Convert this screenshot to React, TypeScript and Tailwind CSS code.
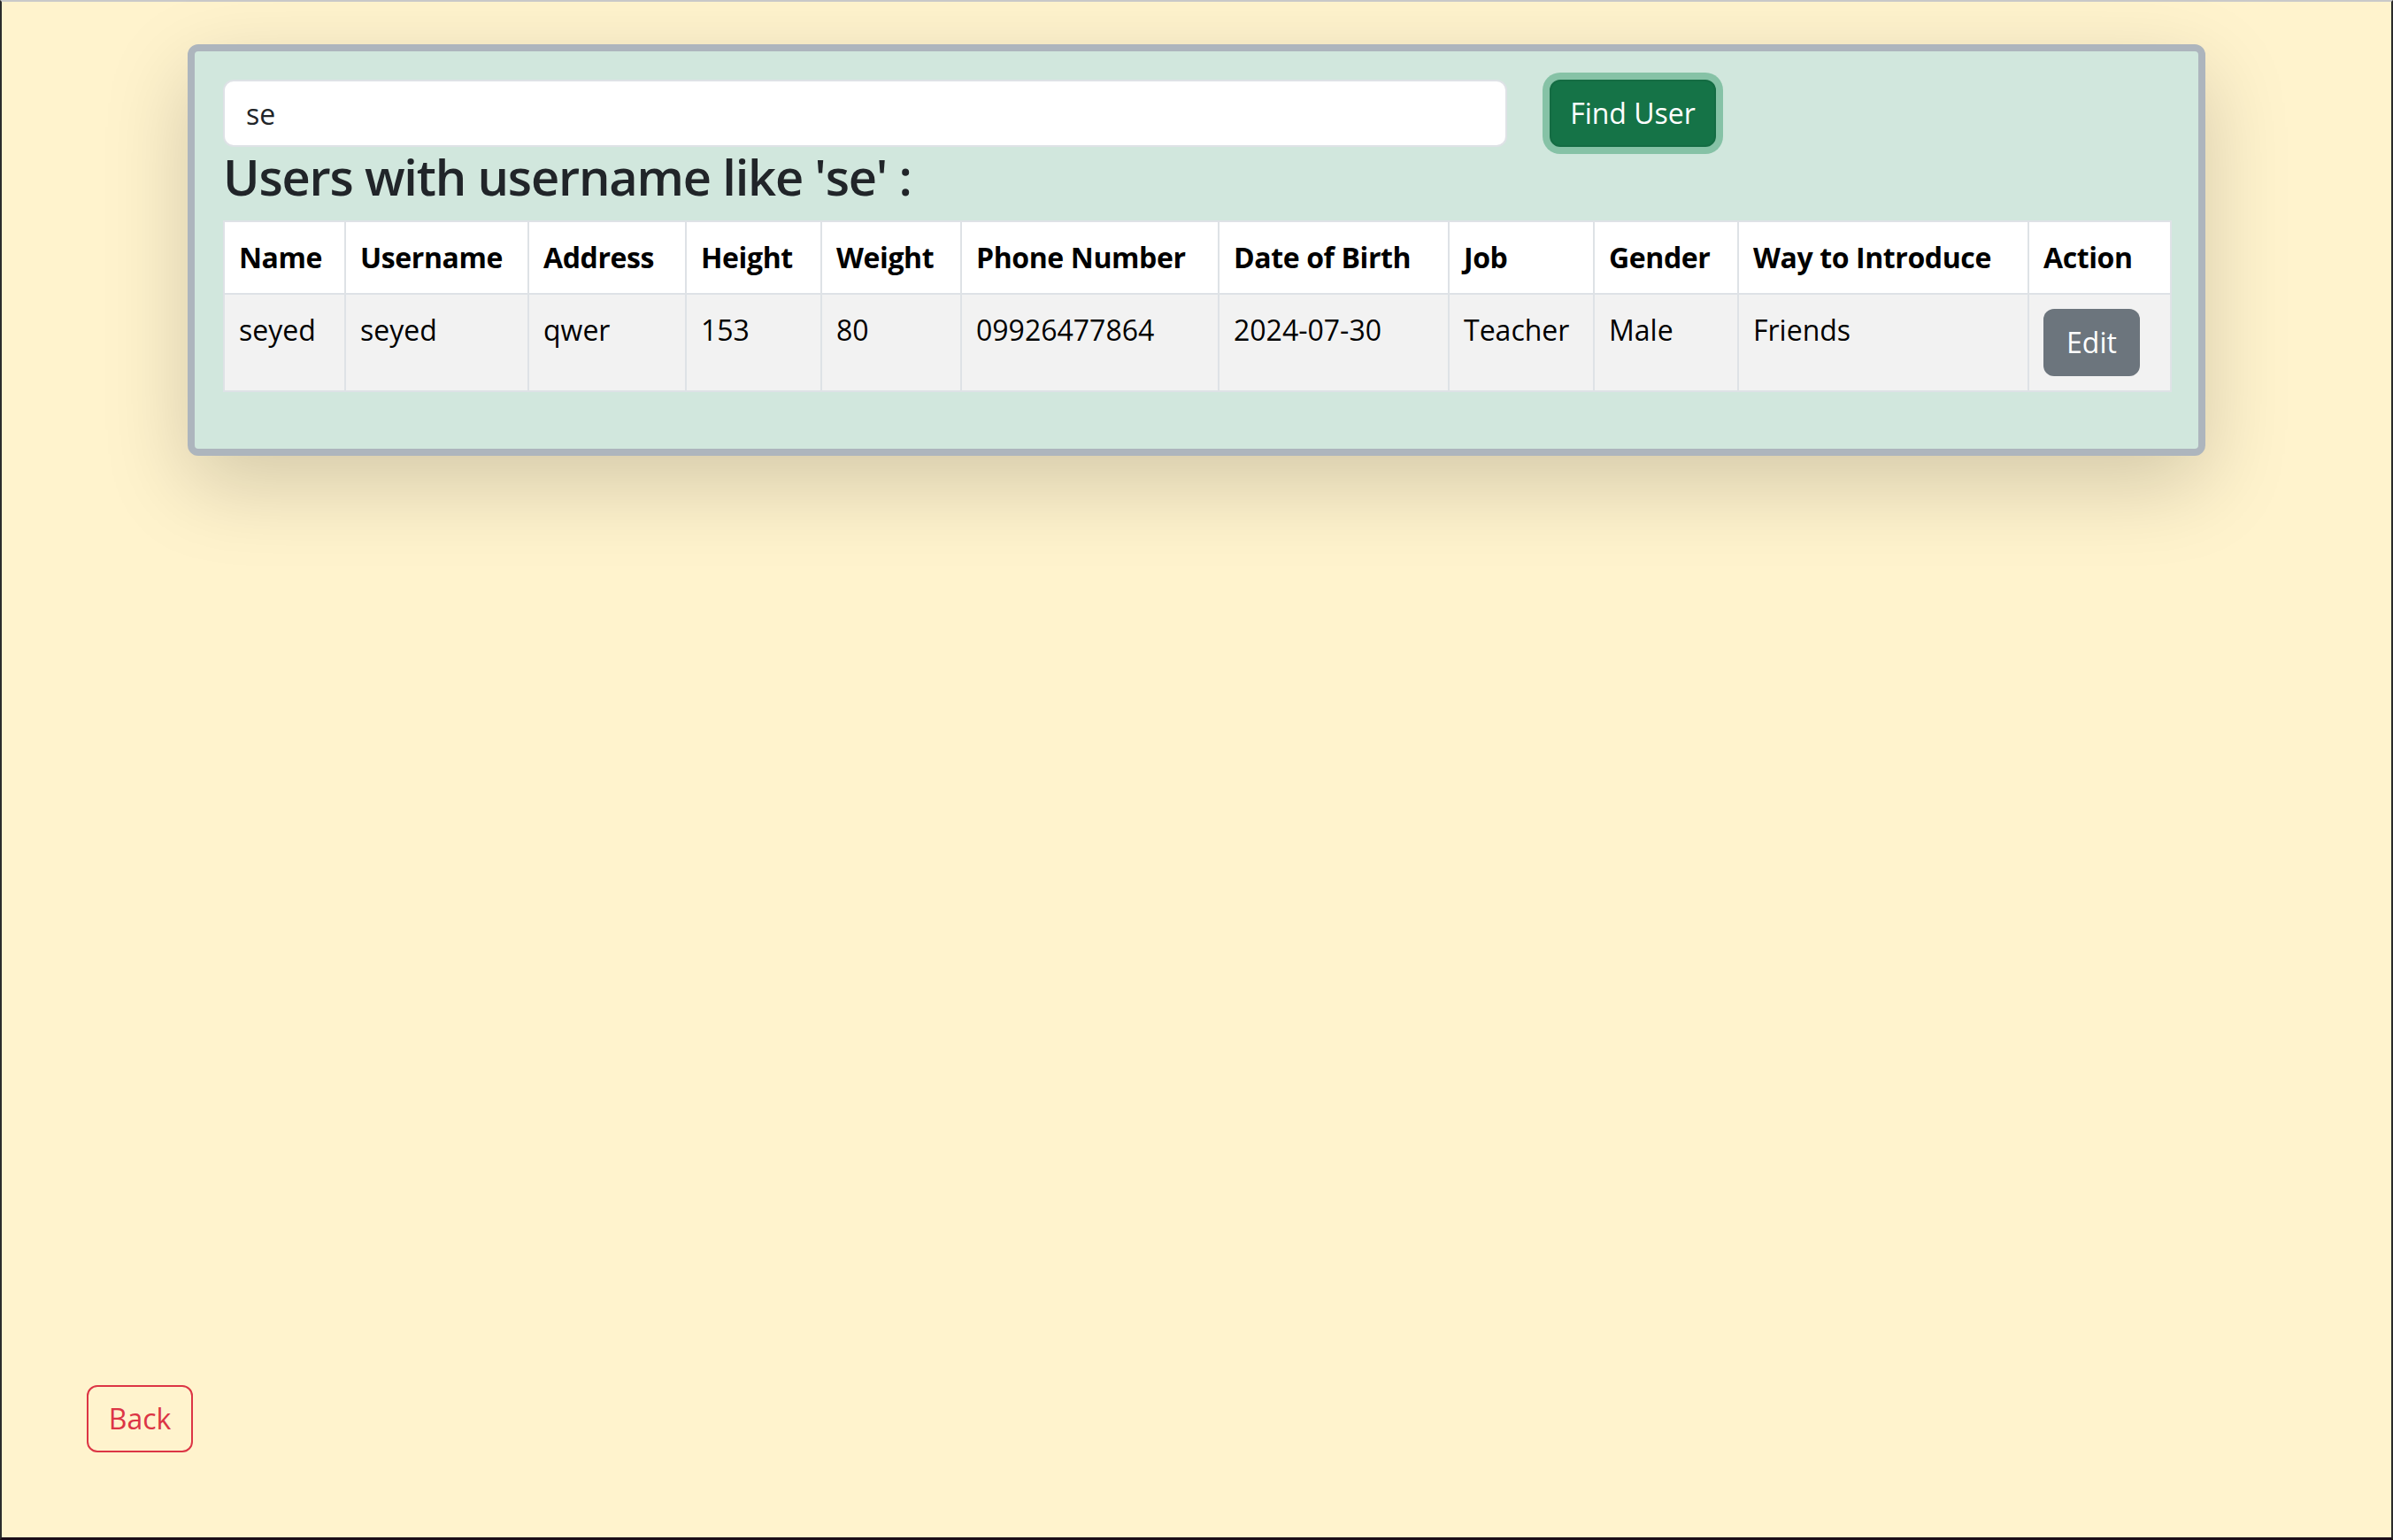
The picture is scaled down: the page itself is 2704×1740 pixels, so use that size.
import React from "react";

const headers = [
  "Name",
  "Username",
  "Address",
  "Height",
  "Weight",
  "Phone Number",
  "Date of Birth",
  "Job",
  "Gender",
  "Way to Introduce",
  "Action",
];

const widths = [137, 207, 178, 153, 158, 291, 260, 164, 163, 328, 161];

const row = [
  "seyed",
  "seyed",
  "qwer",
  "153",
  "80",
  "09926477864",
  "2024-07-30",
  "Teacher",
  "Male",
  "Friends",
];

export default function App() {
  return (
    <div className="h-screen w-full flex flex-col bg-[#fff3cd] border-t-2 border-t-[#c9c9c9] border-l-2 border-l-[#2b2b2b] border-r-2 border-r-[#2b2b2b] border-b-[3px] border-b-[#1c0e18] font-['Open_Sans',sans-serif] text-[#212529]">
      <div className="mx-auto mt-[48px] w-[2280px] rounded-[12px] border-[8px] border-[#adb5bd] bg-[#d1e7dd] p-[32px] shadow-[0_32px_96px_rgba(0,0,0,0.175)]">
        <div className="flex items-center gap-[48px]">
          <input
            defaultValue="se"
            className="h-[76px] w-[1451px] rounded-[12px] border-2 border-[#dee2e6] bg-white px-[24px] text-[32px] leading-[48px] text-[#212529] outline-none"
          />
          <button className="flex h-[76px] w-[188px] items-center justify-center rounded-[12px] border-2 border-[#146c43] bg-[#157347] text-[32px] leading-[48px] text-white shadow-[0_0_0_8px_#86c2a6]">
            Find User
          </button>
        </div>
        <h3 className="mb-[16px] text-[56px] font-semibold leading-[1.2] tracking-[-1.2px] text-[#212529]">
          Users with username like 'se' :
        </h3>
        <table className="mb-[32px] w-[2200px] table-fixed border-collapse border-2 border-[#dee2e6] text-[32px] leading-[48px] text-black">
          <colgroup>
            {widths.map((w, i) => (
              <col key={i} style={{ width: `${w}px` }} />
            ))}
          </colgroup>
          <thead>
            <tr className="bg-white">
              {headers.map((h) => (
                <th
                  key={h}
                  className="border-2 border-[#dee2e6] px-[16px] py-[16px] text-left align-top font-bold tracking-[-0.4px] whitespace-nowrap"
                >
                  {h}
                </th>
              ))}
            </tr>
          </thead>
          <tbody>
            <tr className="bg-[#f2f2f2]">
              {row.map((c, i) => (
                <td
                  key={i}
                  className="border-2 border-[#dee2e6] px-[16px] py-[16px] align-top whitespace-nowrap"
                >
                  {c}
                </td>
              ))}
              <td className="border-2 border-[#dee2e6] px-[16px] py-[16px] align-top">
                <button className="flex h-[76px] w-[109px] items-center justify-center rounded-[12px] bg-[#6c757d] text-[32px] leading-[48px] text-white">
                  Edit
                </button>
              </td>
            </tr>
          </tbody>
        </table>
      </div>
      <div className="flex-1" />
      <div className="pb-[96px] pl-[96px]">
        <button className="flex h-[76px] w-[120px] items-center justify-center rounded-[12px] border-2 border-[#dc3545] text-[32px] leading-[48px] text-[#dc3545]">
          Back
        </button>
      </div>
    </div>
  );
}
